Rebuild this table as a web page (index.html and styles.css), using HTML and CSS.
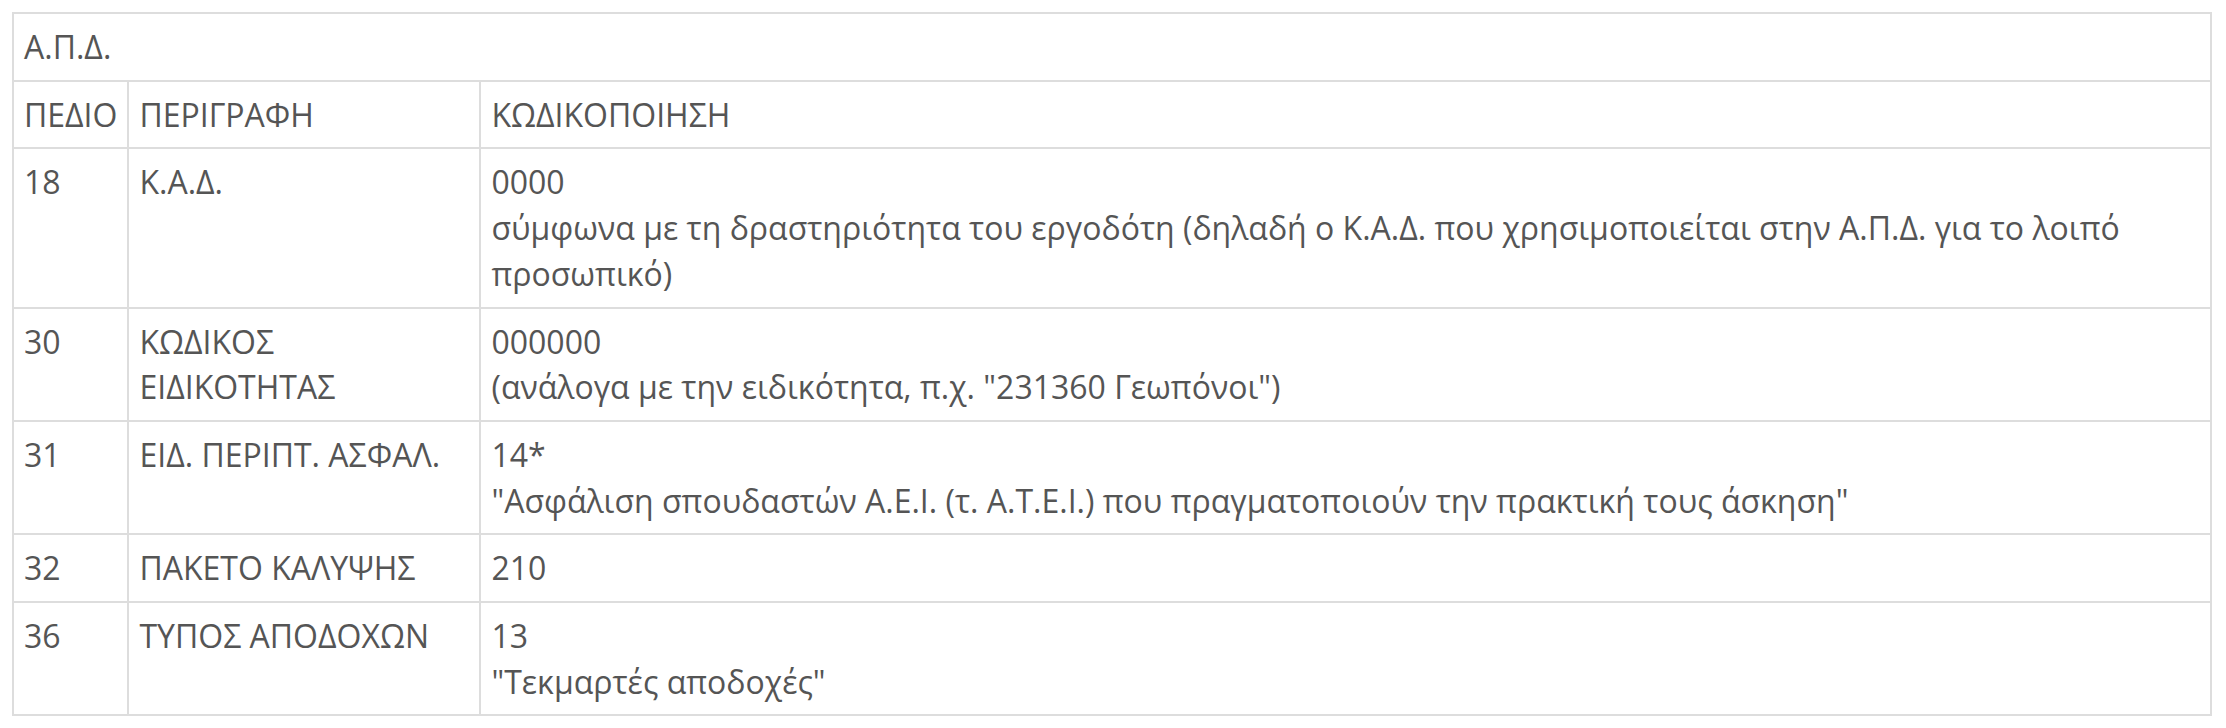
FILE: index.html
```html
<!DOCTYPE html>
<html lang="el">
<head>
<meta charset="utf-8">
<title>Α.Π.Δ.</title>
<link rel="stylesheet" href="styles.css">
</head>
<body>
<table class="apd">
  <colgroup>
    <col class="c1">
    <col class="c2">
    <col class="c3">
  </colgroup>
  <tr><td colspan="3">Α.Π.Δ.</td></tr>
  <tr><td>ΠΕΔΙΟ</td><td>ΠΕΡΙΓΡΑΦΗ</td><td>ΚΩΔΙΚΟΠΟΙΗΣΗ</td></tr>
  <tr><td>18</td><td>Κ.Α.Δ.</td><td>0000<br>σύμφωνα με τη δραστηριότητα του εργοδότη (δηλαδή ο Κ.Α.Δ. που χρησιμοποιείται στην Α.Π.Δ. για το λοιπό προσωπικό)</td></tr>
  <tr><td>30</td><td>ΚΩΔΙΚΟΣ ΕΙΔΙΚΟΤΗΤΑΣ</td><td>000000<br>(ανάλογα με την ειδικότητα, π.χ. "231360 Γεωπόνοι")</td></tr>
  <tr><td>31</td><td>ΕΙΔ. ΠΕΡΙΠΤ. ΑΣΦΑΛ.</td><td>14*<br>"Ασφάλιση σπουδαστών Α.Ε.Ι. (τ. Α.Τ.Ε.Ι.) που πραγματοποιούν την πρακτική τους άσκηση"</td></tr>
  <tr><td>32</td><td>ΠΑΚΕΤΟ ΚΑΛΥΨΗΣ</td><td>210</td></tr>
  <tr><td>36</td><td>ΤΥΠΟΣ ΑΠΟΔΟΧΩΝ</td><td>13<br>"Τεκμαρτές αποδοχές"</td></tr>
</table>
</body>
</html>
```

FILE: styles.css
```css
html, body {
  margin: 0;
  background: #fff;
}
body {
  padding: 12px 14px 12px 12px;
  font-family: "Open Sans", "Noto Sans", sans-serif;
  font-size: 32px;
  line-height: 45.7px;
  color: #555;
}
.apd {
  width: 100%;
  border-collapse: collapse;
  border: 2px solid #ddd;
}
.apd td {
  border: 2px solid #ddd;
  padding: 10px 10px 10px 10px;
  vertical-align: top;
  text-align: left;
}
.c1 { width: 115px; }
.c2 { width: 352px; }
```
